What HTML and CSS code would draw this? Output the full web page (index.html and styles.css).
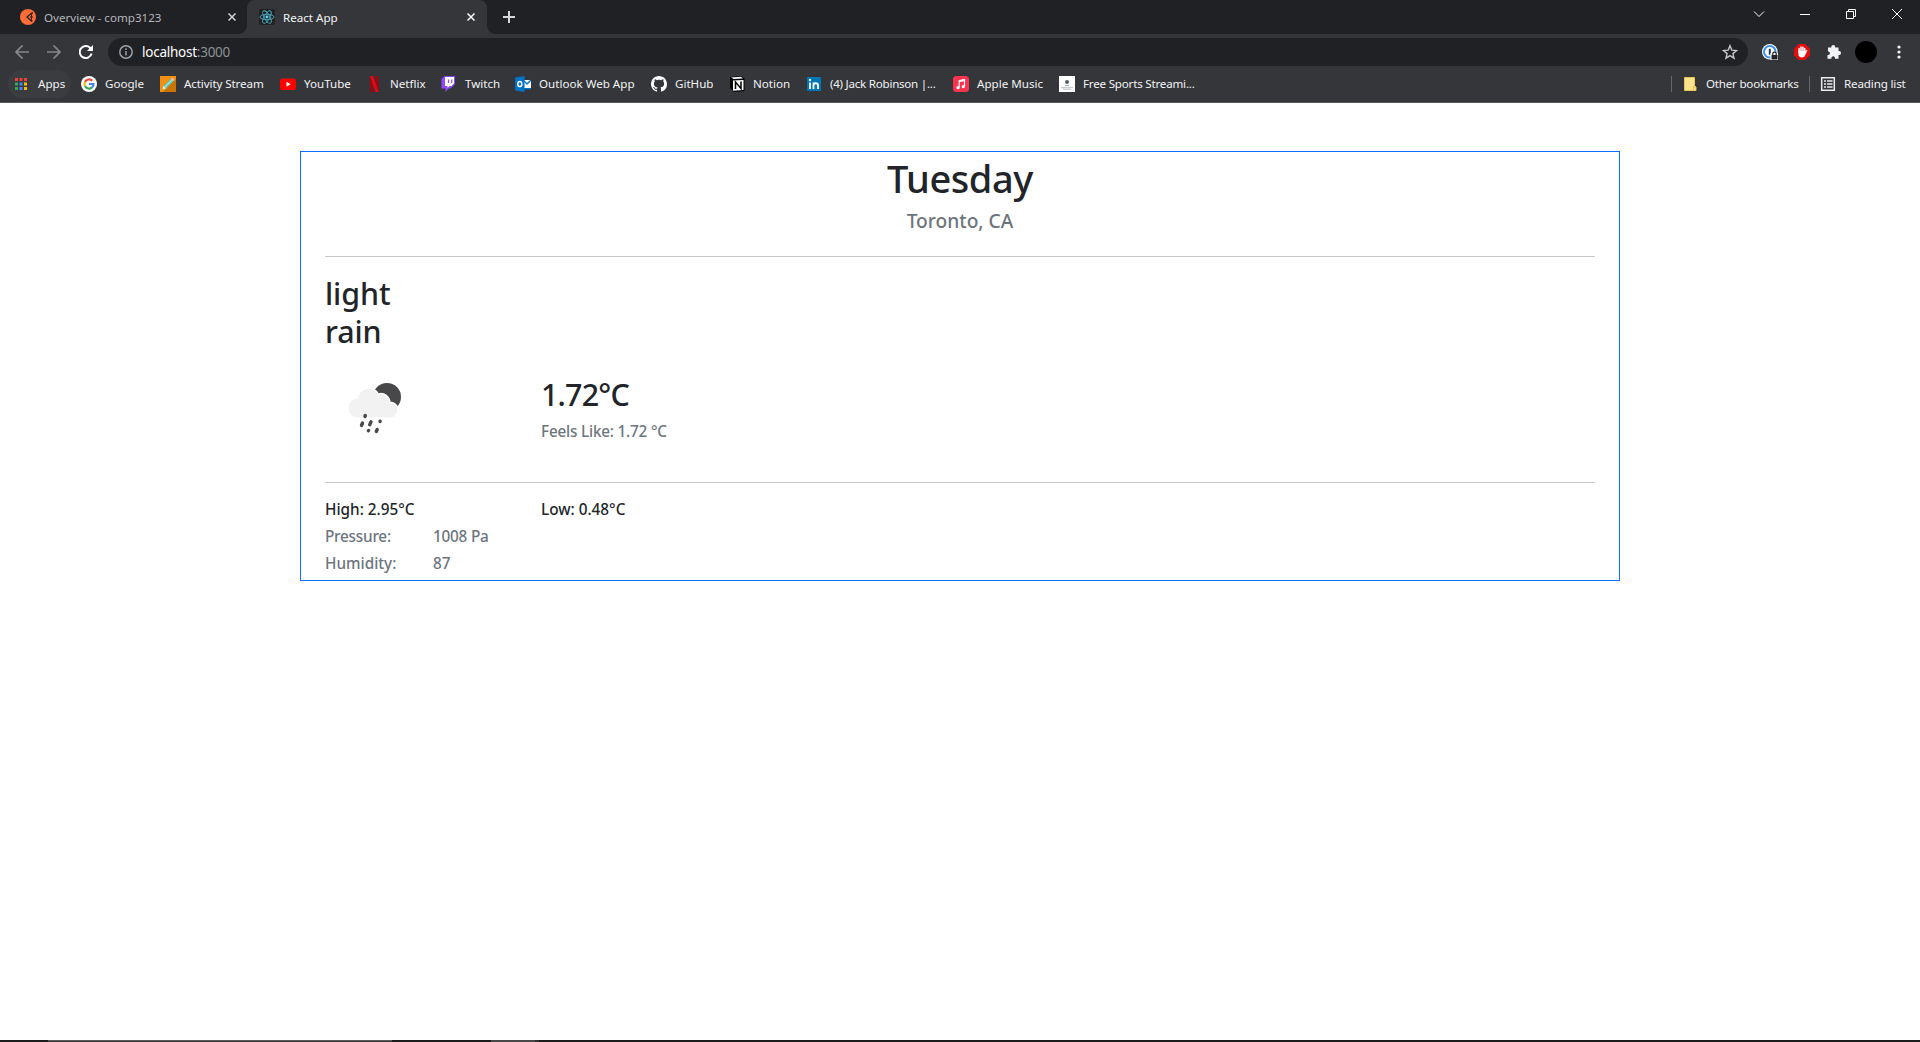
FILE: index.html
```html
<!DOCTYPE html>
<html lang="en">
<head>
<meta charset="utf-8">
<title>React App</title>
<link rel="stylesheet" href="styles.css">
</head>
<body>
<header class="browser">
  <div class="tabstrip">
    <div class="tab tab-idle">
      <svg class="ico" viewBox="0 0 16 16"><circle cx="8" cy="8" r="8" fill="#ff6c37"/><path d="M12.500 3.500 7 8l5 4.500" fill="none" stroke="#202124" stroke-width="1.300"/><path d="M12.500 3.500c-1.500 2.500-1.500 6-.5 9M10 8h3" fill="none" stroke="#202124" stroke-width="1"/><path d="M13.500 4.500c1 2 1 5 0 7" fill="none" stroke="#ff6c37"/></svg>
      <span class="tab-title">Overview - comp3123</span>
      <svg class="close" viewBox="0 0 8 8"><path d="M.5.5l7 7M7.5.5l-7 7"/></svg>
    </div>
    <div class="tab tab-active">
      <svg class="ico" viewBox="0 0 16 16"><rect width="16" height="16" rx="2" fill="#222"/><g fill="none" stroke="#4aa9c0" stroke-width=".9"><ellipse cx="8" cy="8" rx="7" ry="2.7"/><ellipse cx="8" cy="8" rx="7" ry="2.7" transform="rotate(60 8 8)"/><ellipse cx="8" cy="8" rx="7" ry="2.7" transform="rotate(120 8 8)"/></g><circle cx="8" cy="8" r="1.4" fill="#61dafb"/></svg>
      <span class="tab-title">React App</span>
      <svg class="close" viewBox="0 0 8 8"><path d="M.5.5l7 7M7.5.5l-7 7"/></svg>
    </div>
    <svg class="plus" viewBox="0 0 12 12"><path d="M6 0v12M0 6h12"/></svg>
    <div class="window-buttons">
      <svg viewBox="0 0 12 12"><path d="M1 3.500l5 5 5-5"/></svg>
      <svg viewBox="0 0 12 12"><path d="M1 6.500h10"/></svg>
      <svg viewBox="0 0 12 12"><path d="M1.500 3.500h7v7h-7zM3.500 3.500v-2h7v7h-2"/></svg>
      <svg viewBox="0 0 12 12"><path d="M1 1l10 10M11 1L1 11"/></svg>
    </div>
  </div>
  <div class="toolbar">
    <div class="nav">
      <svg class="dim" viewBox="0 0 14 14"><path d="M14 7H1M7.500.5L1 7l6.500 6.500"/></svg>
      <svg class="dim" viewBox="0 0 14 14"><path d="M0 7h13M6.500.5L13 7l-6.500 6.500"/></svg>
      <svg class="reload" viewBox="0 0 14 14"><path d="M12.600 8.500A6 6 0 1 1 11 2.800L12 4"/><path class="tip" d="M14 0v6H8z"/></svg>
    </div>
    <div class="omnibox">
      <svg class="info" viewBox="0 0 14 14"><circle cx="7" cy="7" r="6.200"/><path d="M7 6v4.500M7 3.300v1.600"/></svg>
      <span class="url">localhost<span class="port">:3000</span></span>
      <svg class="star" viewBox="0 0 16 16"><path d="M8 1.700l1.800 4.400 4.700.4-3.600 3.100 1.100 4.600L8 11.700l-4 2.500 1.100-4.600L1.500 6.500l4.700-.4z"/></svg>
    </div>
    <div class="extensions">
      <svg class="ico" viewBox="0 0 16 16"><circle cx="7.800" cy="7.800" r="7.800" fill="#fff"/><circle cx="7.800" cy="7.800" r="5.800" fill="#fff" stroke="#3c92ea" stroke-width="2"/><path d="M7.800 4.800v6" stroke="#1a3560" stroke-width="2"/><path d="M8.500 9h7.500v7H8.500z" fill="#fff"/><path d="M9.500 11h6v4.500h-6z" fill="#222"/><path d="M10.800 11.500V9.800a1.700 1.700 0 0 1 3.400 0v1.700" fill="none" stroke="#222" stroke-width="1.200"/></svg>
      <svg class="ico" viewBox="0 0 16 16"><path d="M4.700 0h6.600L16 4.700v6.600L11.300 16H4.700L0 11.300V4.700z" fill="#e40d0d"/><path d="M5.100 8V4.500M7 7V2.900M8.900 7V3.300M10.700 8V4.500" stroke="#fff" stroke-width="1.500" stroke-linecap="round"/><path d="M4.400 7h7.100l1.300-1.200.6.6-2.400 5.200c-.7 1.500-1.700 1.900-3 1.900-2.400 0-3.600-1.500-3.600-3.500z" fill="#fff"/></svg>
      <svg class="ico" viewBox="0 0 16 16"><path d="M2 3.500h3.300V3a1.900 1.900 0 0 1 3.900 0v.5h3.300v3.600h.6a1.900 1.900 0 0 1 0 3.900h-.6v3.700H9V14a1.800 1.800 0 0 0-3.600 0v.7H1.500V11h.7a1.800 1.800 0 0 0 0-3.600H2z" fill="#f1f3f4"/></svg>
      <span class="avatar"></span>
      <svg class="dots" viewBox="0 0 4 14"><circle cx="2" cy="2" r="1.600"/><circle cx="2" cy="7" r="1.600"/><circle cx="2" cy="12" r="1.600"/></svg>
    </div>
  </div>
  <nav class="bookmarks">
    <div class="bm bm-apps"><svg class="ico" viewBox="0 0 16 16"><path d="M2 2h3v3H2zM6.500 2h3v3h-3zM11 2h3v3h-3z" fill="#ea4335"/><path d="M2 6.500h3v3H2zM2 11h3v3H2z" fill="#34a853"/><path d="M6.500 6.500h3v3h-3zM6.500 11h3v3h-3z" fill="#4285f4"/><path d="M11 6.500h3v3h-3zM11 11h3v3h-3z" fill="#fbbc05"/></svg><span>Apps</span></div>
    <div class="bm bm-google"><svg class="ico" viewBox="0 0 16 16"><circle cx="8" cy="8" r="8" fill="#fff"/><g fill="none" stroke-width="2.200"><path d="M11.200 4.800A4.500 4.500 0 0 0 4 5.900" stroke="#ea4335"/><path d="M4 5.900a4.500 4.500 0 0 0 0 4.200" stroke="#fbbc05"/><path d="M4 10.100a4.500 4.500 0 0 0 7 1.300" stroke="#34a853"/><path d="M11 11.400A4.500 4.500 0 0 0 12.500 8H8" stroke="#4285f4"/></g></svg><span>Google</span></div>
    <div class="bm bm-activity"><svg class="ico" viewBox="0 0 16 16"><path d="M0 0h16v16H0z" fill="#f29111"/><path d="M16 3v13H3z" fill="#c97500"/><path d="M2.500 13.500l1-3.500L11 2.500 13.500 5 6 12.500z" fill="#5ec9c2"/><path d="M2.500 13.500l1-3.500L6 12.500z" fill="#fff0cc"/><path d="M11 2.500l1-1L14.500 4l-1 1z" fill="#ffb8b8"/><path d="M4.600 11.200L12.200 3.700" stroke="#c4f2ec"/></svg><span>Activity Stream</span></div>
    <div class="bm bm-youtube"><svg class="ico" viewBox="0 0 16 16"><rect y="2.500" width="16" height="11.500" rx="2.800" fill="#f00"/><path d="M6.500 5.800v4.900l4.200-2.450z" fill="#fff"/></svg><span>YouTube</span></div>
    <div class="bm bm-netflix"><svg class="ico" viewBox="0 0 16 16"><path d="M4 0h3v16H4zM9.500 0h3v16h-3z" fill="#9e0610"/><path d="M4 0h3l5.500 16h-3z" fill="#e50914"/></svg><span>Netflix</span></div>
    <div class="bm bm-twitch"><svg class="ico" viewBox="0 0 16 16"><path d="M3.500 0H14v8l-4.500 4.500H7.500L4.500 16v-3.500H.5V3z" fill="#9146ff"/><path d="M4 1h9v6.500l-2.500 2.500H8.500L6.500 12v-2H4z" fill="#fff"/><path d="M7.500 3.500v3.500M10.700 3.500v3.500" stroke="#9146ff" stroke-width="1.200"/></svg><span>Twitch</span></div>
    <div class="bm bm-outlook"><svg class="ico" viewBox="0 0 16 16"><path d="M8 4h8v9H8z" fill="#fff"/><path d="M9 5l3 3 4-4" fill="none" stroke="#0072c6" stroke-width="1.300"/><path d="M8 12h8v1.500H8z" fill="#0072c6"/><path d="M0 1.500L9.500 0v16L0 14.500z" fill="#0072c6"/><ellipse cx="4.800" cy="8" rx="2" ry="2.600" fill="none" stroke="#fff" stroke-width="1.500"/></svg><span>Outlook Web App</span></div>
    <div class="bm bm-github"><svg class="ico" viewBox="0 0 16 16"><path fill="#fff" d="M8 0C3.580 0 0 3.580 0 8c0 3.540 2.290 6.530 5.470 7.590.4.070.55-.17.55-.38 0-.19-.01-.82-.01-1.490-2.010.37-2.530-.49-2.690-.94-.09-.23-.48-.94-.82-1.130-.28-.15-.68-.52-.01-.53.63-.01 1.080.58 1.230.82.72 1.210 1.870.87 2.330.66.07-.52.28-.87.51-1.070-1.780-.2-3.640-.89-3.640-3.950 0-.87.31-1.590.82-2.150-.08-.2-.36-1.020.08-2.120 0 0 .67-.21 2.200.82.64-.18 1.320-.27 2-.27s1.360.09 2 .27c1.530-1.040 2.200-.82 2.200-.82.44 1.100.16 1.920.08 2.120.51.56.82 1.270.82 2.150 0 3.070-1.870 3.750-3.650 3.950.29.25.54.73.54 1.480 0 1.070-.01 1.930-.01 2.200 0 .21.15.46.55.38A8.010 8.010 0 0 0 16 8c0-4.420-3.580-8-8-8z"/></svg><span>GitHub</span></div>
    <div class="bm bm-notion"><svg class="ico" viewBox="0 0 16 16"><path d="M1 1l11-1 3.500 2.500V15L5 16l-4-4z" fill="#000"/><path d="M4 4.500L14.500 4v10L4 14.700z" fill="#fff"/><path d="M2 1.500l10-.7 2 1.600-9.500.6z" fill="#fff"/><path d="M6.500 13V6l5.500 6.500v-7" fill="none" stroke="#000" stroke-width="1.500"/></svg><span>Notion</span></div>
    <div class="bm bm-linkedin"><svg class="ico" viewBox="0 0 16 16"><path d="M1 1h14v14H1z" fill="#0077b5"/><path d="M4 6.500V13M7.500 6.500V13M7.500 9.500c0-3 4.500-3 4.500 0V13" fill="none" stroke="#fff" stroke-width="1.800"/><circle cx="4" cy="4" r="1.200" fill="#fff"/></svg><span>(4) Jack Robinson |...</span></div>
    <div class="bm bm-music"><svg class="ico" viewBox="0 0 16 16"><rect width="16" height="16" rx="3.500" fill="#fa3450"/><path d="M6.200 11.500V4.700L11.500 3.600v6.700" fill="none" stroke="#fff" stroke-width="1.200"/><path d="M6 5.300l5.500-1.200" stroke="#fff" stroke-width="1.800"/><circle cx="5" cy="11.700" r="1.600" fill="#fff"/><circle cx="10.300" cy="10.600" r="1.600" fill="#fff"/></svg><span>Apple Music</span></div>
    <div class="bm bm-sports"><svg class="ico" viewBox="0 0 16 16"><path d="M0 0h16v16H0z" fill="#fff"/><circle cx="8" cy="6" r="2" fill="#59606c"/><path d="M6 9.500h4" stroke="#9aa" /><path d="M2 11.700h12M4 13.200h8" stroke="#b9bec8"/></svg><span>Free Sports Streami...</span></div>
    <div class="bm-right">
      <i class="sep"></i>
      <svg class="ico" viewBox="0 0 16 16"><path d="M2.500 1.500h10v9.500h1.500v3.500h-11.500z" fill="#ffe48e" stroke="#e6c559"/><path d="M11.500 14v-3.500H14" fill="none" stroke="#e6c559"/></svg>
      <span class="t-other">Other bookmarks</span>
      <i class="sep"></i>
      <svg class="ico" viewBox="0 0 16 16"><path d="M1.700 1.700h12.600v12.600H1.700z" fill="none" stroke="#e8eaed" stroke-width="1.500"/><path d="M4 5h2M7 5h5.500M4 8h2M7 8h5.500M4 11h2M7 11h5.500" stroke="#e8eaed" stroke-width="1.500"/></svg>
      <span class="t-reading">Reading list</span>
    </div>
  </nav>
</header>
<main class="page">
  <section class="card">
    <div class="heading">
      <h1>Tuesday</h1>
      <h5>Toronto, CA</h5>
    </div>
    <hr>
    <div class="current">
      <div class="conditions">
        <h2>light<br>rain</h2>
        <svg class="weather" viewBox="0 0 100 100">
          <circle cx="62" cy="39" r="14" fill="#48484a"/>
          <g fill="#f2f2f2" stroke="#fff" stroke-width="3" paint-order="stroke"><path d="M33 59.500a9.500 9.500 0 0 1 0-19 10.500 10.500 0 0 1 20-3.500 8 8 0 0 1 11 8 7.300 7.300 0 0 1 2 14.500z"/></g>
          <g stroke="#48484a" stroke-width="3.400" stroke-linecap="round"><path d="M40.300 57.500l-.4 1M37.500 65l-1 2.500M46 63.800l-1.300 2.900M43.600 72.400l-.2.400M55.200 63.200l-.2.400M52.200 71.500l-.9 2"/></g>
        </svg>
      </div>
      <div class="temperature">
        <h2>1.72°C</h2>
        <h6 class="muted">Feels Like: 1.72 °C</h6>
      </div>
    </div>
    <hr>
    <div class="details">
      <h6>High: 2.95°C</h6>
      <h6 class="low">Low: 0.48°C</h6>
      <h6 class="muted tight">Pressure:</h6>
      <h6 class="muted tight wide">1008 Pa</h6>
      <h6 class="muted">Humidity:</h6>
      <h6 class="muted wide">87</h6>
    </div>
  </section>
</main>
<footer class="taskbar"><i class="window"></i><i class="task"></i><i class="edge"></i></footer>
</body>
</html>
```
FILE: styles.css
```css
* { box-sizing: border-box; }
body {
  margin: 0;
  height: 1042px;
  display: flex;
  flex-direction: column;
  overflow: hidden;
  background: #fff;
  color: #212529;
  font-family: "Noto Sans", "Open Sans", sans-serif;
}
svg { display: block; flex: none; }
.ico { width: 16px; height: 16px; }

/* browser frame */
.browser {
  height: 103px;
  background: #35363a;
  border-bottom: 1px solid #5b5b5f;
  color: #f1f3f4;
  font-size: 11.6px;
  white-space: nowrap;
}
.tabstrip { display: flex; height: 34px; background: #202124; }
.tab { display: flex; align-items: center; height: 34px; }
.tab-idle { width: 247px; padding: 0 11px 0 20px; color: #b4b7bb; }
.tab-active {
  position: relative;
  width: 240px;
  padding: 0 12px;
  background: #35363a;
  border-radius: 8px 8px 0 0;
}
.tab-active::before, .tab-active::after {
  content: "";
  position: absolute;
  bottom: 0;
  width: 8px;
  height: 8px;
}
.tab-active::before { left: -8px; background: radial-gradient(circle at 0 0, #202124 7.5px, #35363a 8px); }
.tab-active::after { right: -8px; background: radial-gradient(circle at 100% 0, #202124 7.5px, #35363a 8px); }
.tab-title { margin-left: 8px; flex: 1; }
.close { width: 8px; height: 8px; stroke: #d0d2d5; stroke-width: 1.5; }
.tab-active .close { stroke: #fff; }
.plus { width: 12px; height: 12px; margin: 11px 0 0 16px; stroke: #d5d7da; stroke-width: 2; }
.window-buttons { display: flex; gap: 34px; margin: 8px 17px 0 auto; }
.window-buttons svg { width: 12px; height: 12px; fill: none; stroke: #fff; }
.toolbar { display: flex; align-items: center; height: 36px; }
.nav { display: flex; gap: 18px; width: 108px; padding-left: 15px; }
.nav svg { width: 14px; height: 14px; fill: none; stroke: #85878b; stroke-width: 1.7; }
.nav .reload { stroke: #fff; stroke-width: 2; }
.nav .tip { fill: #fff; stroke: none; }
.omnibox {
  display: flex;
  align-items: center;
  width: 1640px;
  height: 28px;
  padding: 0 10px 0 11px;
  border-radius: 14px;
  background: #202124;
}
.info { width: 14px; height: 14px; fill: none; stroke: #9aa0a6; stroke-width: 1.5; }
.url { flex: 1; margin-left: 9px; color: #fff; font-size: 13.5px; letter-spacing: -.25px; }
.port { color: #8d9196; }
.star { width: 16px; height: 16px; fill: none; stroke: #c4c7ca; stroke-width: 1.4; }
.extensions { display: flex; align-items: center; gap: 16px; padding-left: 14px; }
.avatar { width: 22px; height: 22px; margin-left: -3px; border-radius: 50%; background: #000; }
.dots { width: 4px; height: 14px; margin-left: 4px; fill: #f1f3f4; }

.bookmarks { display: flex; align-items: center; height: 28px; padding-left: 8px; }
.bookmarks span { padding-bottom: 1px; }
.bm { display: flex; align-items: center; gap: 8px; height: 28px; }
.bm-apps { width: 63px; gap: 9px; margin-right: 10px; padding-left: 5px; border-radius: 14px; background: #3b3c40; }
.bm-google { width: 79px; }
.bm-activity { width: 120px; letter-spacing: -.1px; }
.bm-youtube { width: 86px; }
.bm-netflix { width: 75px; }
.bm-twitch { width: 74px; }
.bm-outlook { width: 136px; }
.bm-github { width: 78px; }
.bm-notion { width: 77px; }
.bm-linkedin { width: 147px; letter-spacing: -.25px; }
.bm-music { width: 106px; }
.bm-sports { letter-spacing: -.2px; }
.bm-right { display: flex; align-items: center; margin-left: auto; width: 249px; }
.bm-right span { margin-left: 8px; }
.t-other { width: 103px; letter-spacing: -.22px; }
.t-reading { letter-spacing: -.15px; }
.sep { width: 1px; height: 16px; margin-right: 10px; background: #66686c; }

/* weather card */
.page { flex: 1; padding: 48px 300px 0; }
.card { height: 430px; padding: 0 24px; border: 1px solid #0d6efd; }
h1, h2, h5, h6 { margin: 0; font-weight: 500; white-space: nowrap; }
h1 { margin-bottom: 4px; font-size: 38px; line-height: 52px; letter-spacing: -.45px; }
h2 { font-size: 30.4px; line-height: 38.4px; letter-spacing: -.1px; }
h5 { font-size: 19.2px; line-height: 26px; padding-bottom: 6px; }
h6 { font-size: 15.3px; line-height: 19.2px; }
h5, .muted { color: #6c757d; }
hr { height: 1px; margin: 16px 0; border: 0; background: #c7c8c9; }
.heading { text-align: center; }
.current { display: grid; grid-template-columns: 216px 1fr; height: 193px; }
.conditions { padding-top: 2px; }
.weather { width: 100px; height: 100px; margin-top: 6px; }
.temperature { padding-top: 103px; }
.temperature h2 { margin-bottom: 8px; letter-spacing: -.8px; }
.temperature h6 { letter-spacing: -.2px; }
.details { display: grid; grid-template-columns: 108px 108px 1fr; row-gap: 7.8px; padding-top: 1.3px; }
.low { grid-column: 3; }
.wide { grid-column: 2 / 4; }
.tight { letter-spacing: -.22px; }

/* sliver of the desktop taskbar */
.taskbar { display: flex; height: 2px; background: #1b1b1b; }
.window { width: 344px; margin-left: 48px; background: #333; border-top: 1px solid #5e5e5e; }
.task { width: 44px; margin-left: 99px; background: #484848; }
.edge { width: 4px; background: #303030; }
```
